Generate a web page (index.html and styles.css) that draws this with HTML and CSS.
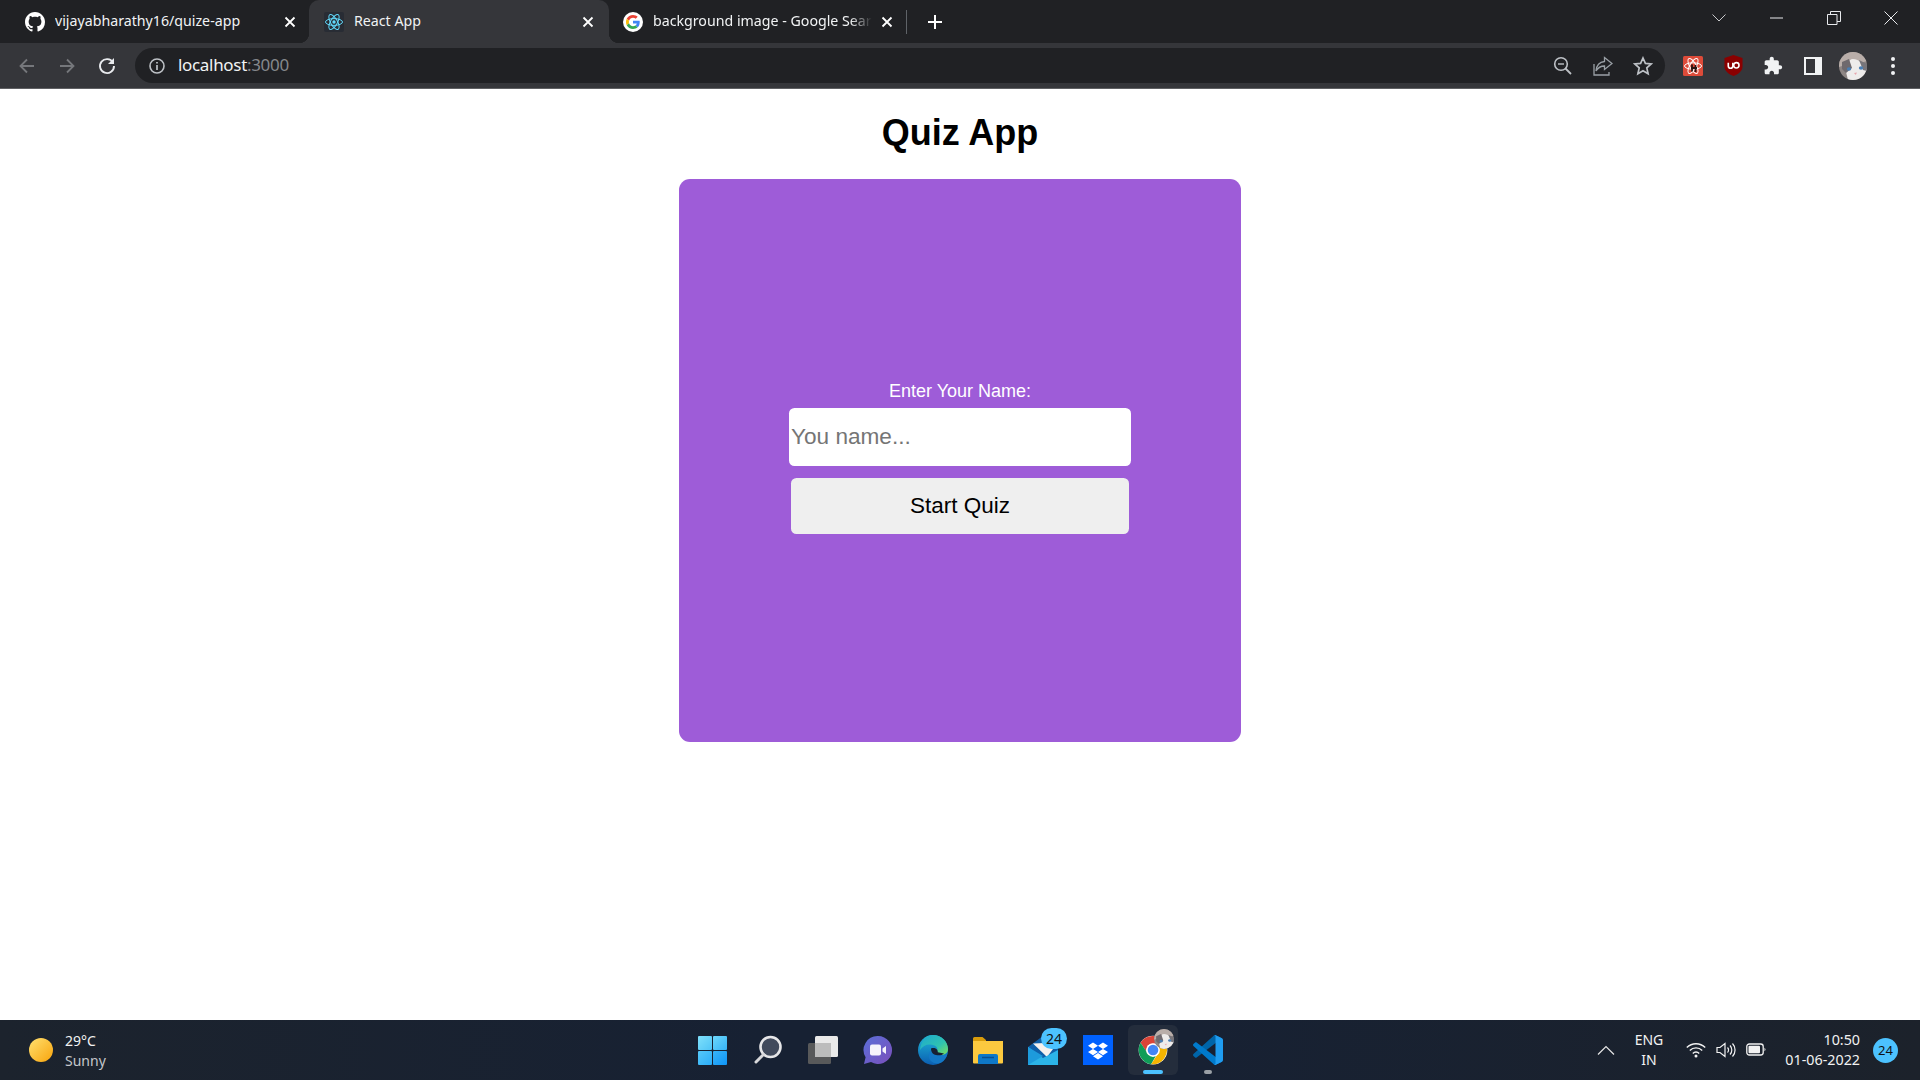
FILE: index.html
```html
<!DOCTYPE html>
<html lang="en">
<head>
<meta charset="utf-8">
<title>React App</title>
<link rel="stylesheet" href="styles.css">
</head>
<body>
<svg class="defs" width="0" height="0" aria-hidden="true">
  <defs>
    <clipPath id="catclip"><circle cx="14" cy="14" r="14"/></clipPath>
    <symbol id="cat" viewBox="0 0 28 28">
      <g clip-path="url(#catclip)">
        <rect width="28" height="28" fill="#8d8583"/>
        <path d="M0 0h28v9L18 12l-6-1L0 15z" fill="#b9aea9"/>
        <path d="M14 7c6 0 12 6 14 12v9H9l-2-8c0-6 2-13 7-13z" fill="#eeeceb"/>
        <path d="M3 10l7-3 3 9-6 5-4-4z" fill="#6f6a6e"/>
        <path d="M20 8l8 4v7l-4-1z" fill="#77757a"/>
        <ellipse cx="10" cy="17" rx="2.2" ry="1.8" fill="#4a7fb5"/>
        <ellipse cx="22" cy="16" rx="2.2" ry="1.8" fill="#4a7fb5"/>
        <path d="M15 21l3-.4-1.2 2.4z" fill="#e8a5ad"/>
      </g>
    </symbol>
  </defs>
</svg>

<header class="tabstrip">
  <div class="tab tab-first">
    <svg class="tab-icon" viewBox="0 0 16 16"><path fill="#fff" d="M8 0C3.58 0 0 3.58 0 8c0 3.54 2.29 6.53 5.47 7.59.4.07.55-.17.55-.38 0-.19-.01-.82-.01-1.49-2.01.37-2.53-.49-2.69-.94-.09-.23-.48-.94-.82-1.13-.28-.15-.68-.52-.01-.53.63-.01 1.08.58 1.23.82.72 1.21 1.87.87 2.33.66.07-.52.28-.87.51-1.07-1.78-.2-3.64-.89-3.64-3.95 0-.87.31-1.59.82-2.15-.08-.2-.36-1.02.08-2.12 0 0 .67-.21 2.2.82.64-.18 1.32-.27 2-.27.68 0 1.36.09 2 .27 1.53-1.04 2.2-.82 2.2-.82.44 1.1.16 1.92.08 2.12.51.56.82 1.27.82 2.15 0 3.07-1.87 3.75-3.65 3.95.29.25.54.73.54 1.48 0 1.07-.01 1.93-.01 2.2 0 .21.15.46.55.38A8.013 8.013 0 0016 8c0-4.42-3.58-8-8-8z"/></svg>
    <span class="tab-title">vijayabharathy16/quize-app</span>
    <svg class="tab-close" viewBox="0 0 12 12"><path d="M1.5 1.5l9 9M10.5 1.5l-9 9" stroke="#fff" stroke-width="1.8" fill="none"/></svg>
  </div>
  <div class="tab tab-active">
    <svg class="tab-icon" viewBox="0 0 20 20"><rect width="20" height="20" rx="2" fill="#282c34"/><g fill="none" stroke="#61dafb" stroke-width="1"><ellipse cx="10" cy="10" rx="8.5" ry="3.4"/><ellipse cx="10" cy="10" rx="8.5" ry="3.4" transform="rotate(60 10 10)"/><ellipse cx="10" cy="10" rx="8.5" ry="3.4" transform="rotate(120 10 10)"/></g><circle cx="10" cy="10" r="1.7" fill="#61dafb"/></svg>
    <span class="tab-title">React App</span>
    <svg class="tab-close" viewBox="0 0 12 12"><path d="M1.5 1.5l9 9M10.5 1.5l-9 9" stroke="#fff" stroke-width="1.8" fill="none"/></svg>
  </div>
  <div class="tab tab-last">
    <svg class="tab-icon" viewBox="0 0 48 48"><circle cx="24" cy="24" r="24" fill="#fff"/><g transform="translate(7.2 7.2) scale(.7)"><path fill="#EA4335" d="M24 9.5c3.54 0 6.71 1.22 9.21 3.6l6.85-6.85C35.9 2.38 30.47 0 24 0 14.62 0 6.51 5.38 2.56 13.22l7.98 6.19C12.43 13.72 17.74 9.5 24 9.5z"/><path fill="#4285F4" d="M46.98 24.55c0-1.57-.15-3.09-.38-4.55H24v9.02h12.94c-.58 2.96-2.26 5.48-4.78 7.18l7.73 6c4.51-4.18 7.09-10.36 7.09-17.65z"/><path fill="#FBBC05" d="M10.53 28.59c-.48-1.45-.76-2.99-.76-4.59s.27-3.14.76-4.59l-7.98-6.19C.92 16.46 0 20.12 0 24c0 3.88.92 7.54 2.56 10.78l7.97-6.19z"/><path fill="#34A853" d="M24 48c6.48 0 11.93-2.13 15.89-5.81l-7.73-6c-2.15 1.45-4.92 2.3-8.16 2.3-6.26 0-11.57-4.22-13.47-9.91l-7.98 6.19C6.51 42.62 14.62 48 24 48z"/></g></svg>
    <span class="tab-title tab-title-faded">background image - Google Search</span>
    <svg class="tab-close" viewBox="0 0 12 12"><path d="M1.5 1.5l9 9M10.5 1.5l-9 9" stroke="#fff" stroke-width="1.8" fill="none"/></svg>
  </div>
  <div class="newtab"><svg viewBox="0 0 16 16" width="16" height="16"><path d="M8 1v14M1 8h14" stroke="#fff" stroke-width="2" fill="none"/></svg></div>
  <div class="strip-spacer"></div>
  <div class="tabsearch"><svg viewBox="0 0 14 8" width="14" height="8"><path d="M.5.5L7 7l6.5-6.5" stroke="#c8c9cb" stroke-width="1" fill="none"/></svg></div>
  <div class="winbtn"><svg viewBox="0 0 14 14" width="14" height="14"><path d="M0 7h13" stroke="#e8eaed" stroke-width="1"/></svg></div>
  <div class="winbtn"><svg viewBox="0 0 14 14" width="14" height="14"><path d="M.5 3.5h9.500v10H.5zM3.500 3.500V.5h10v10H10" stroke="#e8eaed" stroke-width="1" fill="none"/></svg></div>
  <div class="winbtn"><svg viewBox="0 0 14 14" width="14" height="14"><path d="M.5.5l13 13M13.500.5l-13 13" stroke="#e8eaed" stroke-width="1" fill="none"/></svg></div>
</header>

<nav class="toolbar">
  <div class="tool"><svg viewBox="0 0 18 18" width="18" height="18"><path d="M16 9H3M9 2.500L2.500 9 9 15.500" stroke="#75777b" stroke-width="1.800" fill="none"/></svg></div>
  <div class="tool"><svg viewBox="0 0 18 18" width="18" height="18"><path d="M2 9h13M9 2.500L15.500 9 9 15.500" stroke="#75777b" stroke-width="1.800" fill="none"/></svg></div>
  <div class="tool"><svg viewBox="0 0 18 18" width="18" height="18"><path d="M15 5.500A7 7 0 1 0 16 9" stroke="#e8eaed" stroke-width="1.900" fill="none"/><path d="M16 1v6h-6z" fill="#e8eaed"/></svg></div>
  <div class="omnibox">
    <svg class="omni-info" viewBox="0 0 18 18" width="18" height="18"><circle cx="9" cy="9" r="7" fill="none" stroke="#bdc1c6" stroke-width="1.600"/><path d="M9 8v5M9 5v1.600" stroke="#bdc1c6" stroke-width="1.700"/></svg>
    <span class="url">localhost<span class="url-port">:3000</span></span>
    <div class="omni-spacer"></div>
    <div class="tool"><svg viewBox="0 0 20 20" width="20" height="20"><circle cx="8" cy="8" r="6.300" fill="none" stroke="#bdc1c6" stroke-width="1.600"/><path d="M12.500 12.500L18 18" stroke="#bdc1c6" stroke-width="1.800"/><path d="M5 8h6" stroke="#bdc1c6" stroke-width="1.400"/></svg></div>
    <div class="tool"><svg viewBox="0 0 20 20" width="20" height="20"><path d="M11.500 1.500L19 7.500l-7.500 6V10C7.500 10 5 11.500 3 15c.5-5.500 3.500-9 8.500-9.500z" fill="none" stroke="#9aa0a6" stroke-width="1.300"/><path d="M1 8v11h15v-3" fill="none" stroke="#9aa0a6" stroke-width="1.300"/></svg></div>
    <div class="tool"><svg viewBox="0 0 20 20" width="20" height="20"><path d="M10 2l2.400 5.400 5.800.6-4.400 3.900 1.300 5.800L10 14.700l-5.100 3 1.300-5.800L1.800 8l5.800-.6z" fill="none" stroke="#bdc1c6" stroke-width="1.700"/></svg></div>
  </div>
  <div class="tool"><svg viewBox="0 0 20 20" width="20" height="20"><rect width="20" height="20" rx="1.500" fill="#dd4b39"/><g fill="none" stroke="#fff" stroke-width="1"><ellipse cx="10" cy="10" rx="8.500" ry="3.200"/><ellipse cx="10" cy="10" rx="8.500" ry="3.200" transform="rotate(60 10 10)"/><ellipse cx="10" cy="10" rx="8.500" ry="3.200" transform="rotate(120 10 10)"/></g><path d="M9 8.500v7M12.500 9v7M8 12h6" stroke="#2a1512" stroke-width="1.800"/></svg></div>
  <div class="tool"><svg viewBox="0 0 20 22" width="19" height="21"><path d="M10 0l9.500 3v9c0 5-4.500 8-9.500 10-5-2-9.500-5-9.500-10V3z" fill="#8a0000"/><path d="M4.500 8v3.500a2.400 2.400 0 0 0 4.800 0V8" fill="none" stroke="#fff" stroke-width="1.700"/><circle cx="13" cy="10.800" r="2.800" fill="none" stroke="#fff" stroke-width="1.700"/></svg></div>
  <div class="tool"><svg viewBox="0 0 24 24" width="20" height="20"><path fill="#f1f3f4" d="M20.500 11H19V7c0-1.100-.9-2-2-2h-4V3.500C13 2.120 11.880 1 10.500 1S8 2.120 8 3.500V5H4c-1.100 0-1.990.9-1.990 2v3.800H3.500c1.490 0 2.700 1.210 2.700 2.700s-1.210 2.700-2.700 2.700H2V20c0 1.100.9 2 2 2h3.800v-1.500c0-1.490 1.210-2.700 2.700-2.700 1.490 0 2.700 1.210 2.700 2.700V22H17c1.100 0 2-.9 2-2v-4h1.500c1.380 0 2.500-1.120 2.500-2.500S21.880 11 20.500 11z"/></svg></div>
  <div class="tool"><div class="sidepanel"></div></div>
  <div class="tool"><svg width="28" height="28"><use href="#cat"/></svg></div>
  <div class="tool"><div class="kebab"><i></i><i></i><i></i></div></div>
</nav>

<main class="page">
  <h1 class="title">Quiz App</h1>
  <section class="card">
    <label class="name-label" for="name">Enter Your Name:</label>
    <input class="name-input" id="name" type="text" placeholder="You name...">
    <button class="start-btn" type="button">Start Quiz</button>
  </section>
</main>

<footer class="taskbar">
  <div class="weather">
    <div class="sun"></div>
    <div class="weather-text">
      <span class="temp">29°C</span>
      <span class="cond">Sunny</span>
    </div>
  </div>
  <div class="apps">
    <div class="app"><div class="winlogo"><i></i><i></i><i></i><i></i></div></div>
    <div class="app"><svg viewBox="0 0 30 30" width="30" height="30"><circle cx="17.500" cy="12" r="10" fill="#414a5c" stroke="#e6e6e8" stroke-width="2.600"/><path d="M10.500 19.500L3 27" stroke="#d8d8da" stroke-width="3" stroke-linecap="round"/></svg></div>
    <div class="app"><svg viewBox="0 0 32 30" width="32" height="30"><rect x="8" y="1" width="23" height="21" rx="1.500" fill="#e9e9e9"/><rect x="1" y="8" width="23" height="21" rx="1.500" fill="#5e5e5e" fill-opacity=".93"/><rect x="8" y="8" width="16" height="14" fill="#bcbcbc"/></svg></div>
    <div class="app"><svg viewBox="0 0 30 30" width="30" height="30"><defs><linearGradient id="chat" x1="0" y1="0" x2="1" y2="1"><stop offset="0" stop-color="#5b6fd8"/><stop offset="1" stop-color="#7a4fbb"/></linearGradient></defs><path d="M15 1a14 14 0 1 1-7 26.100L1 29l1.600-6.800A14 14 0 0 1 15 1z" fill="url(#chat)"/><rect x="7" y="9.500" width="11" height="11" rx="2" fill="#f5f3fb"/><path d="M19.500 13.500l3.500-2.500v8l-3.500-2.500z" fill="#f5f3fb"/></svg></div>
    <div class="app"><svg viewBox="0 0 30 30" width="30" height="30"><defs><linearGradient id="edge" x1="0" y1="0" x2="0" y2="1"><stop offset="0" stop-color="#1fb6d6"/><stop offset="1" stop-color="#0b5eb2"/></linearGradient><linearGradient id="edge2" x1="0" y1="0" x2="1" y2="1"><stop offset="0" stop-color="#1ea8d0"/><stop offset=".6" stop-color="#2fc3b0"/><stop offset="1" stop-color="#7ee05b"/></linearGradient></defs><circle cx="15" cy="15" r="15" fill="url(#edge)"/><path d="M15 0c8.500 0 15 6.500 15 14 0 4-3.500 6-7 6-3 0-5-1-5.500-2.500 2.500-1 3-5-1-7C11 8 5 10 2 15 3 6 8 0 15 0z" fill="url(#edge2)"/><path d="M22 20c3.500 0 6 0 7.500-2-.5 3-2 6-4 8-3.500 3.500-10 3-13-.5-2.500-3-2-8 .5-10 .5 4 4 4.500 9 4.500z" fill="#1479c8" fill-opacity=".9"/><path d="M13 13.500c3.500-1.500 7 .5 6.800 3.700l6.200 1.300c-2 2-5.500 2-8 1.500-3-.5-5-3-5-6.500z" fill="#172133"/></svg></div>
    <div class="app"><svg viewBox="0 0 30 28" width="30" height="28"><path d="M0 2.500A1.500 1.500 0 0 1 1.500 1h8L13 4v20H0z" fill="#d99c0c"/><path d="M0 5h30v21.500a1 1 0 0 1-1 1H1a1 1 0 0 1-1-1z" fill="#fcc93f"/><path d="M5 20a2 2 0 0 1 2-2h16a2 2 0 0 1 2 2v8H5z" fill="#0f78c8"/><path d="M9 21.500h12" stroke="#0a4f90" stroke-width="1.500"/></svg></div>
    <div class="app"><svg viewBox="0 0 30 30" width="30" height="30"><path d="M0 12L15 1l15 11v17H0z" fill="#0f5fa8"/><path d="M5 8.500l12-.5 8 6-6 8z" fill="#f5f1ee"/><path d="M0 12l15 11 15-8v15H0z" fill="#2cb4e8"/><path d="M0 30V12l15 9z" fill="#1d9bdc"/></svg><span class="app-badge">24</span></div>
    <div class="app"><div class="dropbox"><svg viewBox="0 0 30 30" width="30" height="30"><path fill="#fff" d="M10 7.500l5 3.200-5 3.200-5-3.200zM20 7.500l5 3.200-5 3.200-5-3.200zM5 17.100l5-3.200 5 3.200-5 3.200zM25 17.100l-5-3.200-5 3.200 5 3.200zM10 21.300l5-3.200 5 3.200-5 3.200z"/></svg></div></div>
    <div class="app app-open">
      <svg viewBox="0 0 48 48" width="30" height="30"><circle cx="24" cy="24" r="23" fill="#fff"/><path fill="#db4437" d="M24 14h20A23 23 0 0 0 4.100 12.500l11 17A10 10 0 0 1 24 14z"/><path fill="#0f9d58" d="M4.100 12.500A23 23 0 0 0 21 46.800l8-14-13.700-3.500z"/><path fill="#f4b400" d="M44 14a23 23 0 0 1-23 32.800l11.500-18A10 10 0 0 0 32 18z"/><circle cx="24" cy="24" r="11" fill="#fff"/><circle cx="24" cy="24" r="8.500" fill="#4285f4"/></svg>
      <svg class="app-avatar" width="20" height="20"><use href="#cat"/></svg>
      <span class="run-bar"></span>
    </div>
    <div class="app"><svg viewBox="0 0 100 100" width="30" height="30"><path fill="#0065a9" d="M96.500 10.800L75.900.9c-2.400-1.100-5.200-.6-7.100 1.200L1.400 63.600c-1.800 1.600-1.800 4.500 0 6.100l5.500 5c1.500 1.300 3.700 1.400 5.300.2L93 13.600c2.700-2.100 6.500-.2 6.500 3.200v-.2c0-2.500-1.400-4.700-3-5.800z"/><path fill="#007acc" d="M96.500 89.200L75.900 99.100c-2.400 1.100-5.200.6-7.100-1.200L1.400 36.400c-1.800-1.600-1.800-4.500 0-6.100l5.500-5c1.500-1.300 3.700-1.400 5.300-.2L93 86.400c2.700 2.100 6.500.2 6.500-3.200v.2c0 2.500-1.400 4.700-3 5.800z"/><path fill="#1f9cf0" d="M75.900 99.100c-2.400 1.100-5.200.6-7.100-1.200 2.300 2.300 6.200.7 6.200-2.600V4.700c0-3.300-3.900-4.900-6.200-2.600 1.900-1.800 4.700-2.300 7.100-1.200l20.600 9.900c2.200 1 3.500 3.200 3.500 5.600v67.200c0 2.400-1.300 4.600-3.500 5.600z"/></svg><span class="run-dot"></span></div>
  </div>
  <div class="tray">
    <div class="tray-icon"><svg viewBox="0 0 18 10" width="18" height="10"><path d="M1 9.500L9 1.500l8 8" stroke="#e6e6e6" stroke-width="1.200" fill="none"/></svg></div>
    <div class="lang"><span>ENG</span><span>IN</span></div>
    <div class="tray-icon"><svg viewBox="0 0 20 16" width="20" height="16"><g fill="none" stroke="#f2f2f2" stroke-width="1.400"><path d="M.8 5.500a13 13 0 0 1 18.400 0"/><path d="M3.800 8.500a8.700 8.700 0 0 1 12.400 0"/><path d="M6.800 11.400a4.400 4.400 0 0 1 6.400 0"/></g><circle cx="10" cy="14" r="1.500" fill="#f2f2f2"/></svg></div>
    <div class="tray-icon"><svg viewBox="0 0 20 16" width="20" height="16"><g fill="none" stroke="#f2f2f2" stroke-width="1.200"><path d="M1 5.500h3L9 1.500v13L4 10.500H1z"/><path d="M11.500 5.500a3.500 3.500 0 0 1 0 5"/><path d="M14 3.500a6.500 6.500 0 0 1 0 9"/><path d="M16.500 1.500a9.500 9.500 0 0 1 0 13"/></g></svg></div>
    <div class="tray-icon"><svg viewBox="0 0 20 14" width="20" height="14"><rect x=".8" y="1" width="16.400" height="11" rx="2.500" fill="none" stroke="#f2f2f2" stroke-width="1.300"/><rect x="2.500" y="2.700" width="11.500" height="7.600" rx="1" fill="#f2f2f2"/><path d="M18.500 4.800a2 2 0 0 1 0 3.400z" fill="#f2f2f2"/></svg></div>
    <div class="clock"><span>10:50</span><span>01-06-2022</span></div>
    <div class="notify">24</div>
  </div>
</footer>
</body>
</html>
```

FILE: styles.css
```css
* { box-sizing: border-box; }

html, body { height: 100%; }

body {
  margin: 0;
  height: 100vh;
  overflow: hidden;
  display: flex;
  flex-direction: column;
  background: #fff;
  font-family: "Liberation Sans", Arial, sans-serif;
}

.defs { position: absolute; }

/* Tab strip */
.tabstrip {
  flex: none;
  height: 43px;
  padding-right: 1px;
  background: #202124;
  display: flex;
  align-items: stretch;
  font-family: "Noto Sans", sans-serif;
  font-size: 14.2px;
  color: #f1f3f4;
}

.tab {
  display: flex;
  align-items: center;
  gap: 10px;
  position: relative;
}

.tab-first { width: 309px; padding: 0 9px 0 25px; }
.tab-active {
  width: 300px;
  padding: 0 11px 0 15px;
  background: #35363a;
  border-radius: 10px 10px 0 0;
}
.tab-active::before,
.tab-active::after {
  content: "";
  position: absolute;
  bottom: 0;
  width: 10px;
  height: 10px;
}
.tab-active::before {
  left: -10px;
  background: radial-gradient(circle at 0 0, #202124 10px, #35363a 10.5px);
}
.tab-active::after {
  right: -10px;
  background: radial-gradient(circle at 100% 0, #202124 10px, #35363a 10.5px);
}
.tab-last { width: 298px; padding: 0 10px 0 14px; }

.tab-icon { width: 20px; height: 20px; flex: none; }

.tab-title {
  flex: 1;
  min-width: 0;
  white-space: nowrap;
  overflow: hidden;
  line-height: 20px;
  padding-bottom: 1px;
}
.tab-title-faded {
  margin-right: -5px;
  -webkit-mask-image: linear-gradient(to right, #000 90%, transparent 100%);
  mask-image: linear-gradient(to right, #000 90%, transparent 100%);
}

.tab-close { width: 12px; height: 12px; flex: none; margin: 0 4px; }

.newtab {
  width: 40px;
  margin-left: 8px;
  display: flex;
  align-items: center;
  justify-content: center;
}
.tab-last::after {
  content: "";
  position: absolute;
  right: 0;
  top: 10px;
  height: 24px;
  width: 1px;
  background: #5f6368;
}

.strip-spacer { flex: 1; }

.tabsearch {
  width: 30px;
  height: 36px;
  margin-right: 14px;
  display: flex;
  align-items: center;
  justify-content: center;
}

.winbtn {
  width: 57px;
  height: 36px;
  display: flex;
  align-items: center;
  justify-content: center;
}

/* Toolbar */
.toolbar {
  flex: none;
  height: 46px;
  padding: 5px 7px;
  background: #35363a;
  border-bottom: 1px solid #5f6063;
  display: flex;
  align-items: center;
}

.tool {
  width: 40px;
  height: 35px;
  flex: none;
  display: flex;
  align-items: center;
  justify-content: center;
}

.omnibox {
  flex: 1;
  height: 35px;
  margin: 0 8px;
  padding: 0 2px 0 13px;
  background: #202124;
  border-radius: 18px;
  display: flex;
  align-items: center;
}

.omni-info { flex: none; margin-right: 12px; }

.url {
  font-family: "Noto Sans", sans-serif;
  font-size: 17px;
  letter-spacing: -.32px;
  line-height: 24px;
  padding-bottom: 2px;
  color: #f1f3f4;
}
.url-port { color: #85888c; }
.omni-spacer { flex: 1; }

.sidepanel {
  width: 18px;
  height: 18px;
  border: 2px solid #f1f3f4;
  border-right-width: 7px;
  background: #35363a;
}

.kebab { display: flex; flex-direction: column; gap: 3px; }
.kebab i {
  display: block;
  width: 4px;
  height: 4px;
  border-radius: 50%;
  background: #f1f3f4;
}

/* Page */
.page {
  flex: 1;
  display: flex;
  flex-direction: column;
  align-items: center;
}

.title {
  margin: 24px 0 26px;
  font-size: 36px;
  line-height: 40px;
  font-weight: 700;
  color: #000;
}

.card {
  width: 562px;
  height: 563px;
  padding-bottom: 7px;
  border-radius: 11px;
  background: #9e5cd8;
  display: flex;
  flex-direction: column;
  align-items: center;
  justify-content: center;
}

.name-label {
  font-size: 18px;
  line-height: 20px;
  padding-top: 1px;
  color: #fff;
  margin-bottom: 7px;
}

.name-input {
  width: 342px;
  height: 58px;
  padding: 0 2px;
  border: none;
  border-radius: 5.5px;
  background: #fff;
  font-family: inherit;
  font-size: 22.6px;
  outline: none;
}
.name-input::placeholder { color: #757575; opacity: 1; }

.start-btn {
  width: 338px;
  height: 56px;
  margin-top: 12px;
  border: none;
  border-radius: 5.5px;
  background: #efefef;
  font-family: inherit;
  font-size: 22.5px;
  color: #000;
}

/* Taskbar */
.taskbar {
  flex: none;
  height: 60px;
  background: linear-gradient(to right, #1c232d 0, #172133 40%, #172133 62%, #1c222b 100%);
  display: grid;
  grid-template-columns: 1fr 550px 1fr;
  align-items: center;
  font-family: "Noto Sans", sans-serif;
  font-size: 14px;
  color: #f2f2f2;
}

.weather {
  display: flex;
  align-items: center;
  gap: 12px;
  padding-left: 29px;
}
.sun {
  width: 24px;
  height: 24px;
  border-radius: 50%;
  background: linear-gradient(135deg, #ffe070, #f8a40c);
}
.weather-text { display: flex; flex-direction: column; line-height: 20px; padding-top: 1px; }
.cond { color: #c4c7cb; }

.apps { display: flex; align-items: center; }
.app {
  width: 55px;
  height: 60px;
  position: relative;
  display: flex;
  align-items: center;
  justify-content: center;
}

.winlogo {
  width: 29px;
  height: 29px;
  display: grid;
  grid-template-columns: 1fr 1fr;
  gap: 1px;
}
.winlogo i { display: block; border-radius: 1px; }
.winlogo i:nth-child(1) { background: linear-gradient(135deg, #7fe0fb, #4fc4f7); }
.winlogo i:nth-child(2) { background: linear-gradient(135deg, #6dd7fb, #36b4f8); }
.winlogo i:nth-child(3) { background: linear-gradient(135deg, #55c8f9, #2badf9); }
.winlogo i:nth-child(4) { background: linear-gradient(135deg, #39b4f9, #0f95f7); }

.app-badge {
  position: absolute;
  left: 26px;
  top: 8px;
  width: 26px;
  height: 21px;
  border-radius: 11px;
  background: #4cc2ff;
  color: #111;
  font-size: 14px;
  line-height: 21px;
  text-align: center;
}

.dropbox { width: 30px; height: 30px; background: #0061fe; display: flex; }

.app-open {
  background: #242d3c;
  border-radius: 6px;
  width: 50px;
  height: 50px;
  margin: 0 2.5px;
}
.app-avatar {
  position: absolute;
  left: 26px;
  top: 4px;
}
.run-bar {
  position: absolute;
  left: 15px;
  bottom: 1px;
  width: 20px;
  height: 4px;
  border-radius: 2px;
  background: #4cc2ff;
}
.run-dot {
  position: absolute;
  left: 24px;
  bottom: 6px;
  width: 8px;
  height: 4px;
  border-radius: 2px;
  background: #9aa0a6;
}

.tray {
  display: flex;
  align-items: center;
  justify-content: flex-end;
  padding-right: 22px;
}
.tray-icon {
  width: 30px;
  height: 30px;
  display: flex;
  align-items: center;
  justify-content: center;
}
.lang {
  width: 56px;
  margin-right: 4px;
  display: flex;
  flex-direction: column;
  align-items: center;
  line-height: 20px;
}
.clock {
  width: 89px;
  font-size: 14.3px;
  display: flex;
  flex-direction: column;
  align-items: flex-end;
  line-height: 20px;
}
.notify {
  width: 25px;
  height: 25px;
  margin-left: 13px;
  border-radius: 50%;
  background: #4cc2ff;
  color: #111;
  font-size: 13px;
  line-height: 25px;
  text-align: center;
}
```
